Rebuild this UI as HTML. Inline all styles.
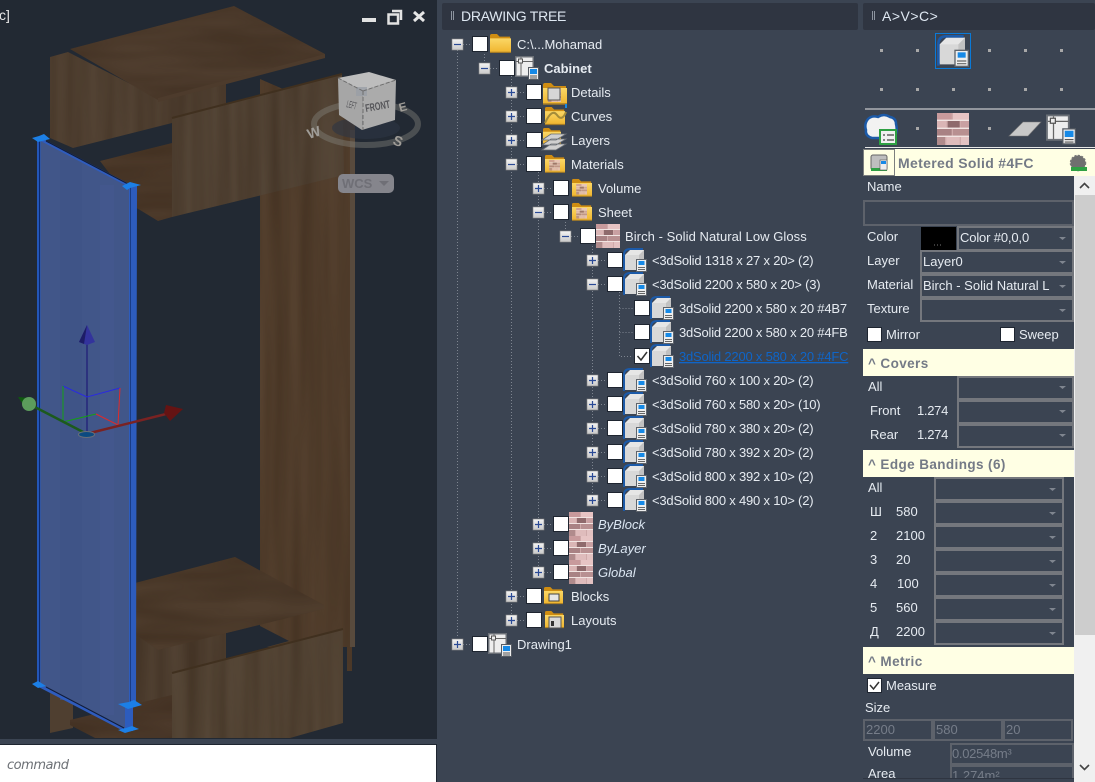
<!DOCTYPE html>
<html><head><meta charset="utf-8"><title>Drawing Tree</title>
<style>
html,body{margin:0;padding:0;background:#3b4452;overflow:hidden}
svg{display:block}
text{font-family:"Liberation Sans",sans-serif;font-size:13px;fill:#e6ebf1}
.h{font-size:14px;fill:#dfe8f2}
.y{font-size:13.5px;font-weight:bold;fill:#747a86;letter-spacing:.4px}
.g{fill:#767d89}
.i{font-style:italic;fill:#dbe6f2}
.s{letter-spacing:-.2px}
.c{fill:none;stroke:#74777d;stroke-width:2}
.f{fill:#3b4452;stroke:#5d626b;stroke-width:2}
</style></head><body>
<svg width="1095" height="782" viewBox="0 0 1095 782" xmlns="http://www.w3.org/2000/svg">
<defs>
<filter id="wood" x="0" y="0" width="100%" height="100%" color-interpolation-filters="sRGB"><feTurbulence type="fractalNoise" baseFrequency="0.07 0.004" numOctaves="2" seed="4"/><feColorMatrix values="0 0 0 0 .16 0 0 0 0 .1 0 0 0 0 .05 0 0 0 .5 -.1"/><feComposite in2="SourceAlpha" operator="in" result="n"/><feMerge><feMergeNode in="SourceGraphic"/><feMergeNode in="n"/></feMerge></filter>
<filter id="woodh" x="0" y="0" width="100%" height="100%" color-interpolation-filters="sRGB"><feTurbulence type="fractalNoise" baseFrequency="0.01 0.06" numOctaves="2" seed="7"/><feColorMatrix values="0 0 0 0 .16 0 0 0 0 .1 0 0 0 0 .05 0 0 0 .5 -.1"/><feComposite in2="SourceAlpha" operator="in" result="n"/><feMerge><feMergeNode in="SourceGraphic"/><feMergeNode in="n"/></feMerge></filter>
<linearGradient id="gold" x1="0" y1="0" x2="0" y2="1"><stop offset="0" stop-color="#fbd766"/><stop offset="1" stop-color="#f0b52e"/></linearGradient>
<linearGradient id="exp" x1="0" y1="0" x2="0" y2="1"><stop offset="0" stop-color="#f4f4f4"/><stop offset="1" stop-color="#c9c9c9"/></linearGradient>
<symbol id="plus" viewBox="0 0 11 11" overflow="visible"><rect width="11" height="11" fill="url(#exp)" stroke="#888" stroke-width=".6"/><path d="M2 5.5h7M5.5 2v7" stroke="#2a4a96" stroke-width="1.2"/></symbol>
<symbol id="minus" viewBox="0 0 11 11" overflow="visible"><rect width="11" height="11" fill="url(#exp)" stroke="#888" stroke-width=".6"/><path d="M2 5.5h7" stroke="#2a4a96" stroke-width="1.2"/></symbol>
<symbol id="doc" viewBox="0 0 24 24"><rect x="13" y="11" width="11" height="13" fill="#5f646b"/><rect x="14" y="12" width="9" height="11" fill="#eee"/><rect x="15.500" y="13" width="6" height="4" fill="#1689e6"/><path d="M15 19.500h7M15 21.500h7" stroke="#666" stroke-width=".9"/></symbol>
<symbol id="solid" viewBox="0 0 24 24"><path d="M2 21V7L7 2H21V21Z" fill="#e6e6e6"/><path d="M2 7H16V22H2Z" fill="#d8d8d8"/><path d="M16 7L21 2V21L16 22Z" fill="#c2c2c2"/><path d="M1 23V7Q1 1 7 1H20" stroke="#1c5aa8" stroke-width="2" fill="none"/><use href="#doc" width="24" height="24"/></symbol>
<symbol id="folder" viewBox="0 0 24 24"><path d="M0 2Q0 0 2 0H8L11 3H23V21H0Z" fill="#cf8d12"/><path d="M0 5H24V21H0Z" fill="url(#gold)"/><path d="M0 21H24" stroke="#a47b28" stroke-width="1.4"/></symbol>
<symbol id="brick" viewBox="0 0 24 24"><rect width="24" height="24" fill="#cfaaaa"/><rect x="0" y="0" width="11" height="5" fill="#c89a9c"/><rect x="12" y="0" width="12" height="5" fill="#e7c4c4"/><rect x="0" y="6" width="7" height="5" fill="#dab5b5"/><rect x="8" y="6" width="9" height="5" fill="#8f6a6c"/><rect x="18" y="6" width="6" height="5" fill="#c9a0a2"/><rect x="0" y="12" width="11" height="5" fill="#a98284"/><rect x="12" y="12" width="12" height="5" fill="#b89091"/><rect x="0" y="18" width="6" height="6" fill="#b08b8c"/><rect x="7" y="18" width="10" height="6" fill="#dfbcbc"/><rect x="18" y="18" width="6" height="6" fill="#e3c2c2"/><path d="M0 5.5H24M0 11.5H24M0 17.5H24" stroke="#f1e4e2" stroke-width="1"/></symbol>
<symbol id="fbrick" viewBox="0 0 24 24"><use href="#folder" width="24" height="24" y="1"/><use href="#brick" x="5" y="7" width="13" height="13" opacity=".85"/></symbol>
<symbol id="layout" viewBox="0 0 24 24"><rect x="0" y="0" width="19" height="21" fill="#6a6f76"/><rect x="1.5" y="1.5" width="16" height="18" fill="#eeeeee"/><path d="M1.5 5.5H18M6 1.5V20" stroke="#666" stroke-width="1"/><rect x="3.5" y="3" width="4" height="4" fill="#eee" stroke="#555"/><rect x="13" y="11" width="11" height="13" fill="#555b63"/><rect x="14" y="12" width="9" height="11" fill="#eee"/><rect x="15" y="13" width="7" height="5" fill="#1689e6"/><path d="M15 20h7M15 22h7" stroke="#555" stroke-width=".9"/></symbol>
</defs>

<!-- base -->
<rect width="1095" height="782" fill="#3b4452"/>
<!-- viewport -->
<rect x="0" y="0" width="437" height="739" fill="#222933"/>
<polygon points="260,79 283,89 355,89 355,647 352,647 352,671 347,671 347,647 260,647" fill="#55412f" filter="url(#wood)"/>
<rect x="350" y="130" width="5" height="517" fill="#584a3d"/>
<polygon points="50,57 68,52 158,98 226,83 226,105 172,123 73,148 50,138" fill="#524233" filter="url(#wood)"/>
<polygon points="70,49 234,6 325,54 325,58 158,100" fill="#503e2f" filter="url(#woodh)"/>
<polygon points="158,98 325,54 325,58 158,102" fill="#4d3b2c"/>
<polygon points="100,161 172,143 172,217 158,221 135,207" fill="#4f3c2c" filter="url(#woodh)"/>
<polygon points="172,118 342,74 344,175 172,217" fill="#564738" filter="url(#wood)"/>
<path d="M172,118 342,74" stroke="#40301f" stroke-width="2"/>
<polygon points="135,630 158,648 226,632 226,660 172,675 172,696 135,706" fill="#524233" filter="url(#wood)"/>
<polygon points="135,583 235,557 324,605 324,609 158,650 135,634" fill="#503e2e" filter="url(#woodh)"/>
<polygon points="226,634 260,626 289,641 226,658" fill="#222933"/>
<polygon points="50,693 73,700 73,728 50,733" fill="#4f3f30"/>
<polygon points="70,720 172,695 172,738 95,738 70,725" fill="#4e3b2c" filter="url(#woodh)"/>
<polygon points="172,673 343,629 343,723 290,738 172,738" fill="#574838" filter="url(#wood)"/>
<path d="M172,673 343,629" stroke="#40301f" stroke-width="2"/>
<!-- blue panel -->
<polygon points="40,140 129,187 129,730 125,729 40,685" fill="#415689"/>
<rect x="60" y="160" width="22" height="540" fill="#3f5486" opacity=".7"/>
<rect x="100" y="185" width="14" height="530" fill="#44598e" opacity=".7"/>
<polygon points="129,186 137,186 136,705 133,705 133,731 125,731 125,705 129,705" fill="#2d5cbd"/>
<rect x="130" y="186" width="1" height="519" fill="#1a3c85"/>
<rect x="37" y="139" width="3.5" height="546" fill="#2456b8"/>
<rect x="39" y="139" width="1" height="546" fill="#0c2a70"/>
<path d="M40 139L130 186" stroke="#2f5cbd" stroke-width="3"/>
<path d="M46 141L128 184" stroke="#111c3a" stroke-width="1"/>
<path d="M40 686L125 730" stroke="#2f5cbd" stroke-width="3"/>
<path d="M46 687L124 728" stroke="#111c3a" stroke-width="1"/>
<g fill="#1c7fe6">
<polygon points="32,138 39,136 44,134 50,139 38,142"/>
<polygon points="122,186 130,182 141,185 130,188 127,190"/>
<polygon points="32,684 38,681 46,686 38,688"/>
<polygon points="118,704 129,702 134,700 142,705 128,709"/>
<polygon points="118,730 126,728 132,726 139,729 125,733"/>
</g>
<!-- gizmo -->
<path d="M87 433V344" stroke="#26267a" stroke-width="1.5"/>
<polygon points="87,325 79,342 87,345 95,342" fill="#33339c"/>
<polygon points="87,325 79,342 84,344" fill="#1d1d66"/>
<path d="M63 386L87 397L120 388" stroke="#2a2ae0" stroke-width="1" fill="none"/>
<path d="M63 386V422L96 414" stroke="#14a014" stroke-width="1" fill="none"/>
<path d="M96 414L118 425L120 388" stroke="#e02a2a" stroke-width="1" fill="none"/>
<path d="M85 433L29 404" stroke="#1c5a1c" stroke-width="2.5"/>
<polygon points="18,397 30,398 24,406" fill="#0e5a0e"/>
<circle cx="29" cy="404" r="7" fill="#5c9c5c"/>
<path d="M90 433L170 413" stroke="#7a2222" stroke-width="2.5"/>
<polygon points="166,405 183,409 170,421 164,413" fill="#651313"/>
<ellipse cx="86.500" cy="434.500" rx="8" ry="3" fill="#0c4a80" stroke="#6a6f78"/>
<!-- nav ring -->
<ellipse cx="366" cy="128" rx="34" ry="11" fill="#2d3644" opacity=".6"/>
<ellipse cx="366" cy="124" rx="52" ry="21" fill="none" stroke="#85857f" stroke-opacity=".42" stroke-width="6"/>
<polygon points="338,78 369,72 396,80 363,91" fill="#bdbdbd"/>
<polygon points="338,78 363,91 362,130 339,115" fill="#a6a6a6"/>
<polygon points="363,91 396,80 395,120 362,130" fill="#ababab"/>
<rect x="356" y="87" width="11" height="9" fill="#9a9fa6" opacity=".8"/>
<path d="M338 78L363 91M363 91L396 80M363 91V130" stroke="#6e6e6e" stroke-width="1" stroke-dasharray="4 2" fill="none"/>
<text x="366" y="112" transform="rotate(-10 366 112)" textLength="25" lengthAdjust="spacingAndGlyphs" style="font-size:11px;font-weight:bold;fill:#555559">FRONT</text>
<text x="346" y="107" transform="rotate(14 346 107)" textLength="10" lengthAdjust="spacingAndGlyphs" style="font-size:10px;fill:#555559">LEFT</text>
<text x="309" y="139" transform="rotate(-18 309 139)" style="font-size:14px;font-weight:bold;fill:#a09d98">W</text>
<text x="392" y="144" transform="rotate(20 392 144)" style="font-size:14px;font-weight:bold;fill:#a09d98">S</text>
<text x="400" y="112" transform="rotate(-15 400 112)" style="font-size:12px;font-weight:bold;fill:#a09d98">E</text>
<rect x="338" y="174" width="56" height="19" rx="5" fill="#85858c"/>
<text x="342" y="188" style="font-size:13px;font-weight:bold;fill:#6f6f76">WCS</text>
<polygon points="379,181 389,181 384,186" fill="#6f6f76"/>
<!-- window controls -->
<rect x="362" y="18" width="14" height="4" fill="#e2e2e2"/>
<path d="M392 11H401V20M388.500 14.500H398V23.500H388.500Z" stroke="#e2e2e2" stroke-width="2.500" fill="none"/>
<path d="M414 12L424 21M424 12L414 21" stroke="#e6e6e6" stroke-width="3"/>
<text x="-1" y="20" style="font-size:14px;fill:#e6e6e6">c]</text>
<!-- command -->
<rect x="0" y="739" width="437" height="6" fill="#3b4452"/>
<rect x="0" y="744" width="437" height="38" fill="#1e2530"/>
<rect x="0" y="745" width="436" height="37" fill="#fff"/>
<text x="7" y="769" textLength="62" style="font-family:'DejaVu Sans',sans-serif;font-style:italic;font-size:13px;fill:#6d7176">command</text>
<rect x="437" y="0" width="6" height="782" fill="#3b4452"/>

<!-- headers -->
<rect x="442" y="3" width="416" height="27" rx="2" fill="#2f3541"/>
<rect x="863" y="3" width="232" height="27" rx="2" fill="#2f3541"/>
<g fill="#8e95a0"><rect x="451" y="11" width="1" height="9"/><rect x="453" y="11" width="1" height="9"/><rect x="872" y="11" width="1" height="9"/><rect x="874" y="11" width="1" height="9"/></g>
<text x="461" y="21" class="h" style="letter-spacing:-.25px">DRAWING TREE</text>
<text x="882" y="21" class="h" style="letter-spacing:.5px">A&gt;V&gt;C&gt;</text>

<!-- tree lines -->
<g stroke="#7e8590" stroke-dasharray="1 2" fill="none">
<path d="M457.500 50V638M484.500 54V62M511.500 76V614M538.500 172V566M565.500 222V230M592.500 246V494M619.500 292V356.500H633"/>
<path d="M619.500 308.500H633M619.500 332.500H633"/>
<path d="M463 44.500H472M490 68.500H499M517 92.500H526M517 116.500H526M517 140.500H526M517 164.500H526M517 596.500H526M517 620.500H526M544 188.500H553M544 212.500H553M544 524.500H553M544 548.500H553M544 572.500H553M571 236.500H580M598 260.500H607M598 284.500H607M598 380.500H607M598 404.500H607M598 428.500H607M598 452.500H607M598 476.500H607M598 500.500H607M463 644.500H472"/>
</g>

<!-- expanders -->
<use href="#minus" x="452" y="39" width="11" height="11"/>
<use href="#minus" x="479" y="63" width="11" height="11"/>
<use href="#plus" x="506" y="87" width="11" height="11"/>
<use href="#plus" x="506" y="111" width="11" height="11"/>
<use href="#plus" x="506" y="135" width="11" height="11"/>
<use href="#minus" x="506" y="159" width="11" height="11"/>
<use href="#plus" x="533" y="183" width="11" height="11"/>
<use href="#minus" x="533" y="207" width="11" height="11"/>
<use href="#minus" x="560" y="231" width="11" height="11"/>
<use href="#plus" x="587" y="255" width="11" height="11"/>
<use href="#minus" x="587" y="279" width="11" height="11"/>
<use href="#plus" x="587" y="375" width="11" height="11"/>
<use href="#plus" x="587" y="399" width="11" height="11"/>
<use href="#plus" x="587" y="423" width="11" height="11"/>
<use href="#plus" x="587" y="447" width="11" height="11"/>
<use href="#plus" x="587" y="471" width="11" height="11"/>
<use href="#plus" x="587" y="495" width="11" height="11"/>
<use href="#plus" x="533" y="519" width="11" height="11"/>
<use href="#plus" x="533" y="543" width="11" height="11"/>
<use href="#plus" x="533" y="567" width="11" height="11"/>
<use href="#plus" x="506" y="591" width="11" height="11"/>
<use href="#plus" x="506" y="615" width="11" height="11"/>
<use href="#plus" x="452" y="639" width="11" height="11"/>

<!-- checkboxes -->
<g fill="#fff" stroke="#1e2530" stroke-width="1">
<rect x="472.500" y="36.500" width="15" height="15"/><rect x="499.500" y="60.500" width="15" height="15"/>
<rect x="526.500" y="84.500" width="15" height="15"/><rect x="526.500" y="108.500" width="15" height="15"/><rect x="526.500" y="132.500" width="15" height="15"/><rect x="526.500" y="156.500" width="15" height="15"/>
<rect x="553.500" y="180.500" width="15" height="15"/><rect x="553.500" y="204.500" width="15" height="15"/>
<rect x="580.500" y="228.500" width="15" height="15"/>
<rect x="607.500" y="252.500" width="15" height="15"/><rect x="607.500" y="276.500" width="15" height="15"/>
<rect x="634.500" y="300.500" width="15" height="15"/><rect x="634.500" y="324.500" width="15" height="15"/><rect x="634.500" y="348.500" width="15" height="15"/>
<rect x="607.500" y="372.500" width="15" height="15"/><rect x="607.500" y="396.500" width="15" height="15"/><rect x="607.500" y="420.500" width="15" height="15"/><rect x="607.500" y="444.500" width="15" height="15"/><rect x="607.500" y="468.500" width="15" height="15"/><rect x="607.500" y="492.500" width="15" height="15"/>
<rect x="553.500" y="516.500" width="15" height="15"/><rect x="553.500" y="540.500" width="15" height="15"/><rect x="553.500" y="564.500" width="15" height="15"/>
<rect x="526.500" y="588.500" width="15" height="15"/><rect x="526.500" y="612.500" width="15" height="15"/>
<rect x="472.500" y="636.500" width="15" height="15"/>
</g>
<path d="M637.500 356L641 360L647 352" stroke="#333" stroke-width="1.500" fill="none"/>

<!-- tree icons -->
<use href="#folder" x="489" y="34" width="23" height="21"/>
<use href="#layout" x="515" y="56" width="24" height="24"/>
<use href="#fbrick" x="543" y="82" width="24" height="24"/>
<rect x="548" y="88" width="12" height="12" fill="#d6d6d6" stroke="#555"/>
<use href="#folder" x="543" y="107" width="24" height="20"/>
<path d="M545 123Q552 108 557 115T566 112" stroke="#a48c3a" stroke-width="2" fill="none"/>
<rect x="565" y="104" width="2" height="4" fill="#1689e6"/>
<use href="#folder" x="542" y="128" width="20" height="18"/>
<path d="M542 140L551 134H566L556 140ZM542 145L551 139H566L556 145ZM542 150L551 144H566L556 150Z" fill="#cfcfcf" stroke="#676c73" stroke-width=".8"/>
<use href="#fbrick" x="543" y="154" width="24" height="20"/>
<use href="#fbrick" x="570" y="178" width="24" height="20"/>
<use href="#fbrick" x="570" y="202" width="24" height="20"/>
<use href="#brick" x="596" y="224" width="24" height="24"/>
<use href="#solid" x="623" y="248" width="24" height="24"/>
<use href="#solid" x="623" y="272" width="24" height="24"/>
<use href="#solid" x="650" y="296" width="24" height="24"/>
<use href="#solid" x="650" y="320" width="24" height="24"/>
<use href="#solid" x="650" y="344" width="24" height="24"/>
<use href="#solid" x="623" y="368" width="24" height="24"/>
<use href="#solid" x="623" y="392" width="24" height="24"/>
<use href="#solid" x="623" y="416" width="24" height="24"/>
<use href="#solid" x="623" y="440" width="24" height="24"/>
<use href="#solid" x="623" y="464" width="24" height="24"/>
<use href="#solid" x="623" y="488" width="24" height="24"/>
<use href="#brick" x="569" y="512" width="24" height="24"/>
<use href="#brick" x="569" y="536" width="24" height="24"/>
<use href="#brick" x="569" y="560" width="24" height="24"/>
<use href="#folder" x="543" y="587" width="21" height="19"/>
<rect x="549" y="594" width="10" height="7" fill="#e6e6e6" stroke="#444"/>
<use href="#folder" x="544" y="611" width="21" height="19"/>
<rect x="549" y="617" width="12" height="11" fill="#d9d9d9" stroke="#555"/>
<rect x="551" y="621" width="3" height="5" fill="#333"/>
<use href="#layout" x="488" y="633" width="24" height="24"/>

<!-- tree text -->
<text x="517" y="49">C:\...Mohamad</text>
<text x="544" y="73" style="font-weight:bold">Cabinet</text>
<text x="571" y="97">Details</text>
<text x="571" y="121">Curves</text>
<text x="571" y="145">Layers</text>
<text x="571" y="169">Materials</text>
<text x="598" y="193">Volume</text>
<text x="598" y="217">Sheet</text>
<text x="625" y="241" style="letter-spacing:.06px">Birch - Solid Natural Low Gloss</text>
<text x="652" y="265" class="s">&lt;3dSolid 1318 x 27 x 20&gt; (2)</text>
<text x="652" y="289" class="s">&lt;3dSolid 2200 x 580 x 20&gt; (3)</text>
<text x="679" y="313" class="s">3dSolid 2200 x 580 x 20 #4B7</text>
<text x="679" y="337" class="s">3dSolid 2200 x 580 x 20 #4FB</text>
<text x="679" y="361" class="s" style="fill:#0f65c8;text-decoration:underline">3dSolid 2200 x 580 x 20 #4FC</text>
<text x="652" y="385" class="s">&lt;3dSolid 760 x 100 x 20&gt; (2)</text>
<text x="652" y="409" class="s">&lt;3dSolid 760 x 580 x 20&gt; (10)</text>
<text x="652" y="433" class="s">&lt;3dSolid 780 x 380 x 20&gt; (2)</text>
<text x="652" y="457" class="s">&lt;3dSolid 780 x 392 x 20&gt; (2)</text>
<text x="652" y="481" class="s">&lt;3dSolid 800 x 392 x 10&gt; (2)</text>
<text x="652" y="505" class="s">&lt;3dSolid 800 x 490 x 10&gt; (2)</text>
<text x="598" y="529" class="i">ByBlock</text>
<text x="598" y="553" class="i">ByLayer</text>
<text x="598" y="577" class="i">Global</text>
<text x="571" y="601">Blocks</text>
<text x="571" y="625">Layouts</text>
<text x="517" y="649">Drawing1</text>

<!-- right panel top icons -->
<g fill="#a8a8a8">
<rect x="880" y="49" width="3" height="3"/><rect x="916" y="49" width="3" height="3"/><rect x="988" y="49" width="3" height="3"/><rect x="1024" y="49" width="3" height="3"/><rect x="1060" y="49" width="3" height="3"/>
<rect x="880" y="88" width="3" height="3"/><rect x="916" y="88" width="3" height="3"/><rect x="952" y="88" width="3" height="3"/><rect x="988" y="88" width="3" height="3"/><rect x="1024" y="88" width="3" height="3"/><rect x="1060" y="88" width="3" height="3"/>
<rect x="916" y="127" width="3" height="3"/><rect x="988" y="127" width="3" height="3"/>
</g>
<rect x="935.500" y="33.500" width="35" height="35" fill="none" stroke="#0a7ad8"/>
<use href="#solid" x="937" y="35" width="32" height="32"/>
<rect x="865" y="108.500" width="230" height="1" fill="#e8e8e8"/>
<rect x="865" y="147" width="230" height="1" fill="#e8e8e8"/>
<path d="M868 119Q872 115 878 117Q884 113 890 117Q896 118 896 124Q898 132 894 138H872Q865 136 866 130Q864 124 868 119Z" fill="#f2f2f2" stroke="#1c5aa8" stroke-width="2.500"/>
<rect x="880" y="130" width="16" height="14" fill="#f0f0f0" stroke="#2ea043" stroke-width="2"/>
<path d="M883 135h2M887 135h7M883 140h2M887 140h7" stroke="#444" stroke-width="1.300"/>
<use href="#brick" x="937" y="113" width="32" height="32"/>
<polygon points="1009,136 1023,122 1041,122 1028,136" fill="#c8c8c8" stroke="#777" stroke-width=".6"/>
<use href="#layout" x="1046" y="113" width="30" height="33"/>

<!-- yellow title -->
<rect x="863" y="149" width="232" height="27" fill="#ffffe4"/>
<rect x="863.500" y="149.500" width="31" height="26" fill="#ffffe4" stroke="#7c7f7e"/>
<rect x="871" y="155" width="16" height="15" rx="2" fill="#bfbfbf" stroke="#666"/>
<rect x="871" y="168" width="16" height="3" fill="#2ea043"/>
<rect x="880" y="160" width="7" height="10" fill="#eee" stroke="#555" stroke-width=".6"/>
<rect x="881" y="161" width="5" height="3" fill="#1689e6"/>
<text x="898" y="168" class="y" style="font-size:14px;letter-spacing:.33px">Metered Solid #4FC</text>
<circle cx="1078" cy="163" r="7.500" fill="#6f6f6f" stroke="#777" stroke-width="1.500" stroke-dasharray="2 1.500"/>
<rect x="1071" y="167" width="16" height="4" fill="#2ea043"/>

<!-- scrollbar -->
<rect x="1074" y="176" width="21" height="606" fill="#f0f0f0"/>
<rect x="1075" y="195" width="20" height="440" fill="#cdcdcd"/>
<path d="M1080 188L1084.500 183.500L1089 188" stroke="#444" stroke-width="1.600" fill="none"/>
<path d="M1080 765L1084.500 769.500L1089 765" stroke="#444" stroke-width="1.600" fill="none"/>

<!-- props -->
<text x="867" y="191">Name</text>
<rect x="864" y="201" width="209" height="24" class="f"/>
<text x="867" y="241">Color</text>
<text x="867" y="265">Layer</text>
<text x="867" y="289">Material</text>
<text x="867" y="313">Texture</text>
<rect x="921" y="227" width="35" height="23" fill="#000"/>
<path d="M934 245h1M937 245h1M940 245h1" stroke="#777"/>
<rect x="958" y="227" width="115" height="23" class="c"/>
<rect x="921" y="251" width="152" height="22" class="c"/>
<rect x="921" y="275" width="152" height="22" class="c"/>
<rect x="921" y="299" width="152" height="22" class="c"/>
<text x="960" y="242" style="letter-spacing:-.15px">Color #0,0,0</text>
<text x="923" y="266">Layer0</text>
<text x="923" y="290">Birch - Solid Natural L</text>
<g fill="#7f858f">
<polygon points="1059,237 1066,237 1062.500,240"/><polygon points="1059,261 1066,261 1062.500,264"/><polygon points="1059,285 1066,285 1062.500,288"/><polygon points="1059,309 1066,309 1062.500,312"/>
<polygon points="1059,386 1066,386 1062.500,389"/><polygon points="1059,410 1066,410 1062.500,413"/><polygon points="1059,434 1066,434 1062.500,437"/>
<polygon points="1049,488 1056,488 1052.500,491"/><polygon points="1049,512 1056,512 1052.500,515"/><polygon points="1049,536 1056,536 1052.500,539"/><polygon points="1049,560 1056,560 1052.500,563"/><polygon points="1049,584 1056,584 1052.500,587"/><polygon points="1049,608 1056,608 1052.500,611"/><polygon points="1049,632 1056,632 1052.500,635"/>
</g>
<g fill="#fff" stroke="#1e2530"><rect x="867.500" y="327.500" width="14" height="14"/><rect x="1000.500" y="327.500" width="14" height="14"/><rect x="867.500" y="678.500" width="14" height="14"/></g>
<path d="M870 685L873.500 689L879 682" stroke="#333" stroke-width="1.500" fill="none"/>
<text x="886" y="339">Mirror</text>
<text x="1019" y="339">Sweep</text>

<rect x="863" y="349" width="211" height="27" fill="#ffffe4"/>
<text x="868" y="368" class="y">^ Covers</text>
<text x="868" y="391">All</text>
<text x="870" y="415">Front</text>
<text x="917" y="415" style="letter-spacing:-.3px">1.274</text>
<text x="870" y="439">Rear</text>
<text x="917" y="439" style="letter-spacing:-.3px">1.274</text>
<rect x="958" y="377" width="115" height="22" class="c"/>
<rect x="958" y="401" width="115" height="22" class="c"/>
<rect x="958" y="425" width="115" height="22" class="c"/>

<rect x="863" y="450" width="211" height="27" fill="#ffffe4"/>
<text x="868" y="469" class="y">^ Edge Bandings (6)</text>
<text x="868" y="492">All</text>
<text x="870" y="516">Ш</text><text x="896" y="516">580</text>
<text x="870" y="540">2</text><text x="896" y="540">2100</text>
<text x="870" y="564">3</text><text x="896" y="564">20</text>
<text x="870" y="588">4</text><text x="897" y="588">100</text>
<text x="870" y="612">5</text><text x="896" y="612">560</text>
<text x="870" y="636">Д</text><text x="896" y="636">2200</text>
<rect x="935" y="478" width="128" height="22" class="c"/>
<rect x="935" y="502" width="128" height="22" class="c"/>
<rect x="935" y="526" width="128" height="22" class="c"/>
<rect x="935" y="550" width="128" height="22" class="c"/>
<rect x="935" y="574" width="128" height="22" class="c"/>
<rect x="935" y="598" width="128" height="22" class="c"/>
<rect x="935" y="622" width="128" height="22" class="c"/>

<rect x="863" y="647" width="211" height="27" fill="#ffffe4"/>
<text x="868" y="666" class="y">^ Metric</text>
<text x="886" y="690">Measure</text>
<text x="865" y="712">Size</text>
<rect x="864" y="720" width="68" height="20" class="f"/>
<rect x="934" y="720" width="68" height="20" class="f"/>
<rect x="1004" y="720" width="68" height="20" class="f"/>
<text x="866" y="734" class="g">2200</text>
<text x="936" y="734" class="g">580</text>
<text x="1006" y="734" class="g">20</text>
<text x="868" y="756">Volume</text>
<rect x="951" y="744" width="122" height="20" class="f"/>
<text x="952" y="758" class="g" style="letter-spacing:-.3px">0.02548m³</text>
<text x="868" y="778">Area</text>
<rect x="951" y="766" width="122" height="20" class="f"/>
<text x="952" y="780" class="g">1.274m²</text>
<rect x="863" y="778" width="211" height="4" fill="#3b4452"/>
<rect x="863" y="778" width="211" height="1" fill="#2f3541"/>
</svg>
</body></html>
